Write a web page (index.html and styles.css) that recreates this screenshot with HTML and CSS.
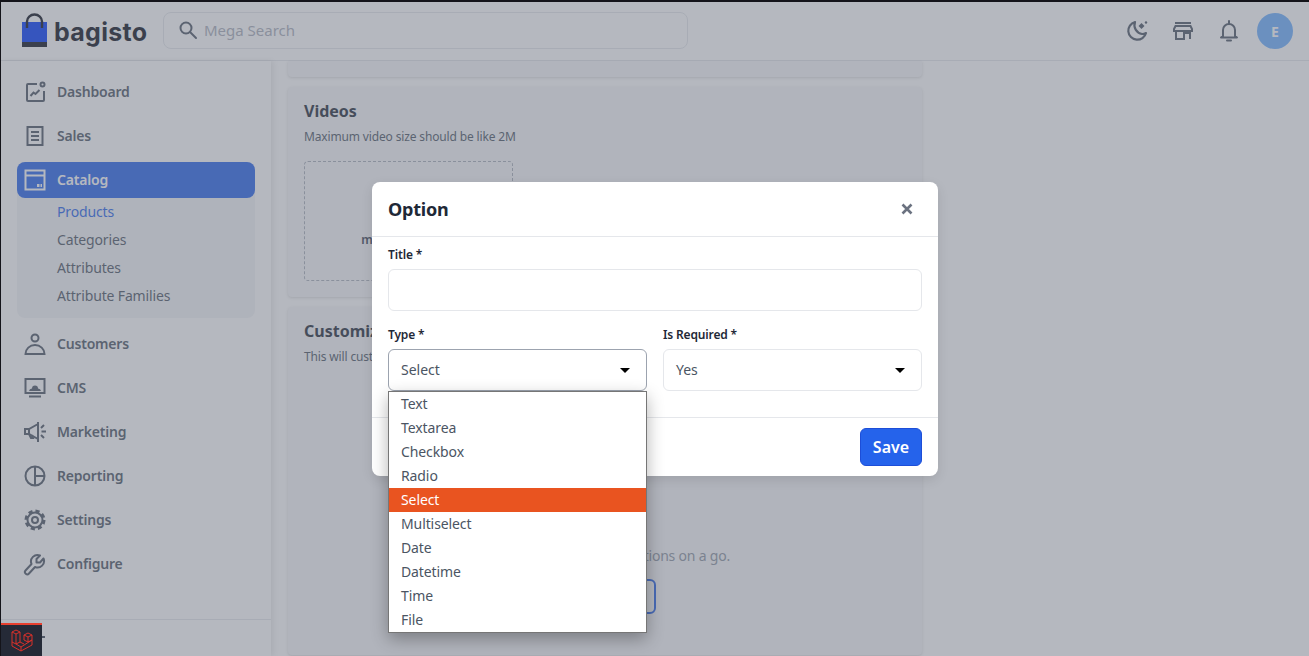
FILE: index.html
```html
<!DOCTYPE html>
<html lang="en">
<head>
    <meta charset="UTF-8">
    <meta name="viewport" content="width=device-width, initial-scale=1.0">
    <title>Option</title>
    <link rel="stylesheet" href="styles.css">
</head>
<body>

<div class="page">
    <header class="topbar">
        <div class="logo">
            <svg width="26" height="36" viewBox="0 0 26 36">
                <rect x="0" y="9" width="25" height="20" fill="#0038fc"/>
                <rect x="0" y="29" width="25" height="5" fill="#0a0e1a"/>
                <path d="M5 15V8.500a7.500 7 0 0 1 15 0V15" fill="none" stroke="#0a0e1a" stroke-width="2.400"/>
            </svg>
            <span class="logo-text">bagisto</span>
        </div>
        <div class="search">
            <svg width="20" height="20" viewBox="0 0 20 20" fill="none" stroke="#4b5563" stroke-width="2">
                <circle cx="8" cy="8" r="5.500"/>
                <path d="M12 12l6 6" stroke-linecap="round"/>
            </svg>
            <span>Mega Search</span>
        </div>
        <div class="top-actions">
            <svg class="top-icon" viewBox="0 0 24 24" fill="none" stroke="#4b5563" stroke-width="2.200">
                <path d="M10 3a9 9 0 1 0 11 11 8 8 0 0 1-4 1A9 9 0 0 1 10 3z" stroke-linejoin="round"/>
                <path d="M13.500 7l3-3 3 3-3 3z" fill="#4b5563" stroke="none"/>
                <circle cx="21" cy="3.500" r="1.200" fill="#4b5563" stroke="none"/>
            </svg>
            <svg class="top-icon" viewBox="0 0 24 24" fill="none" stroke="#4b5563" stroke-width="2">
                <path d="M4 4h16M3 10l1.500-3h15L21 10v2H3zM5 12v8h8v-6h6v6M19 12v2"/>
            </svg>
            <svg class="top-icon" viewBox="0 0 24 24" fill="none" stroke="#4b5563" stroke-width="2">
                <path d="M6 17V11a6 6 0 0 1 12 0v6l2 1.500H4z" stroke-linejoin="round"/>
                <path d="M12 2v3M10 21.500h4" stroke-linecap="round"/>
            </svg>
            <div class="avatar">E</div>
        </div>
    </header>

    <div class="layout">
        <aside class="sidebar">
            <nav class="nav">
                <a class="nav-item">
                    <svg class="nav-icon" viewBox="0 0 24 24"><path d="M14 4H5a1 1 0 0 0-1 1v15a1 1 0 0 0 1 1h15a1 1 0 0 0 1-1v-9"/><circle cx="19.500" cy="4.500" r="2"/><path d="M7.500 16l3-3.500 2 1.500 4-4"/></svg>
                    Dashboard
                </a>
                <a class="nav-item">
                    <svg class="nav-icon" viewBox="0 0 24 24"><rect x="4.500" y="3" width="15" height="18"/><path d="M8 8h8M8 12h8M8 16h8"/></svg>
                    Sales
                </a>
                <div class="nav-group">
                    <a class="nav-item active">
                        <svg class="nav-icon" viewBox="0 0 24 24"><rect x="2.500" y="2.500" width="19" height="19"/><path d="M3 7.500h18"/><path d="M14 16h2.500v3H14zM17.500 16H19v3h-1.500z" fill="#fff" stroke="none"/></svg>
                        Catalog
                    </a>
                    <div class="submenu">
                        <a class="sub-item current">Products</a>
                        <a class="sub-item">Categories</a>
                        <a class="sub-item">Attributes</a>
                        <a class="sub-item">Attribute Families</a>
                    </div>
                </div>
                <a class="nav-item">
                    <svg class="nav-icon" viewBox="0 0 24 24"><circle cx="12" cy="6" r="3.500"/><path d="M2.500 22a9.500 9 0 0 1 19 0z"/></svg>
                    Customers
                </a>
                <a class="nav-item">
                    <svg class="nav-icon" viewBox="0 0 24 24"><rect x="2.500" y="3" width="19" height="14"/><path d="M6 15a3 3 0 0 1 3-2.500 3 3 0 0 1 6 0 3 3 0 0 1 3 2.500z" fill="#4b5563" stroke="none"/><path d="M6 20.500h12"/></svg>
                    CMS
                </a>
                <a class="nav-item">
                    <svg class="nav-icon" viewBox="0 0 24 24"><path d="M15 2v20M15 4L6 9H2v5h4l9 5"/><path d="M6 9v5l2 4h2l-1-3"/><path d="M18 8l3-3M18.500 11.500H23M18 15l3 3"/></svg>
                    Marketing
                </a>
                <a class="nav-item">
                    <svg class="nav-icon" viewBox="0 0 24 24"><circle cx="12" cy="12" r="9.500"/><path d="M12 2.500v19M12 12h9.500"/></svg>
                    Reporting
                </a>
                <a class="nav-item">
                    <svg class="nav-icon" viewBox="0 0 24 24"><circle cx="12" cy="12" r="7.500"/><circle cx="12" cy="12" r="9" stroke-width="3" stroke-dasharray="4.100 3"/><circle cx="12" cy="12" r="3"/></svg>
                    Settings
                </a>
                <a class="nav-item">
                    <svg class="nav-icon" viewBox="0 0 24 24"><path d="M17 10.500h-3.500V7l3.500-3.500a6.500 6.500 0 0 0-8.500 8.500l-6 6.500a2.200 2.200 0 0 0 3.500 3l6-6.500a6.500 6.500 0 0 0 8.500-8.500z" stroke-linejoin="round"/></svg>
                    Configure
                </a>
            </nav>
            <div class="sidebar-foot"><span class="collapse-mark"></span></div>
        </aside>

        <main class="content">
            <section class="card card-cut"></section>
            <section class="card card-videos">
                <h3>Videos</h3>
                <p class="hint">Maximum video size should be like 2M</p>
                <div class="dropzone">
                    <span class="dropzone-types">mp4, webm, mkv</span>
                </div>
            </section>
            <section class="card card-grow">
                <h3>Customizable Options</h3>
                <p class="hint">This will customize the product</p>
                <div class="empty">
                    <strong class="empty-title">Add Option</strong>
                    <span class="empty-text">Add new customizable options on a go.</span>
                    <button class="outline-btn">Add Option</button>
                </div>
            </section>
        </main>
    </div>

    <div class="overlay">
        <div class="modal">
            <div class="modal-head">
                <h2>Option</h2>
                <svg width="12" height="12" viewBox="0 0 12 12" stroke="#6b7280" stroke-width="2.600"><path d="M1.500 1.500l9 9M10.500 1.500l-9 9"/></svg>
            </div>
            <form class="modal-body">
                <label class="field-label">Title *</label>
                <div class="input"></div>
                <div class="field-row">
                    <div class="field">
                        <label class="field-label">Type *</label>
                        <div class="input select focused"><span class="select-value">Select</span><span class="caret"></span></div>
                        <ul class="options">
                            <li>Text</li>
                            <li>Textarea</li>
                            <li>Checkbox</li>
                            <li>Radio</li>
                            <li class="selected">Select</li>
                            <li>Multiselect</li>
                            <li>Date</li>
                            <li>Datetime</li>
                            <li>Time</li>
                            <li>File</li>
                        </ul>
                    </div>
                    <div class="field">
                        <label class="field-label">Is Required *</label>
                        <div class="input select"><span class="select-value">Yes</span><span class="caret"></span></div>
                    </div>
                </div>
            </form>
            <div class="modal-foot">
                <button class="save-btn">Save</button>
            </div>
        </div>
    </div>

    <div class="debugbar">
        <svg width="22" height="24" viewBox="0 0 22 24" fill="none" stroke="#d9302a" stroke-width="1" stroke-linejoin="round">
            <path d="M1 3l4-2 4 2v10l-4 2-4-2zM1 3l4 2 4-2M5 5v10M1 13v4l9 5 11-6v-5M10 22v-4l-5-3M10 18l11-7M9 13l4 2M13 6l4-2 4 2v5l-4 2-4-2zM13 6l4 2 4-2M17 8v5"/>
        </svg>
    </div>
</div>

</body>
</html>
```

FILE: styles.css
```css
* { box-sizing: border-box; }

body {
    margin: 0;
    font-family: "Noto Sans", Arial, sans-serif;
    color: #111827;
    background: #fff;
}

.page {
    position: relative;
    width: 1309px;
    height: 656px;
    overflow: hidden;
    border-top: 2px solid #14141a;
    border-left: 1px solid #14141a;
    background: #fefefe;
    display: flex;
    flex-direction: column;
}

/* top bar */
.topbar {
    height: 59px;
    flex-shrink: 0;
    display: flex;
    align-items: center;
    padding: 0 16px 0 21px;
    background: #fff;
    border-bottom: 1px solid #e5e7eb;
}
.logo { display: flex; align-items: center; gap: 6px; width: 141px; }
.logo-text {
    margin-top: 2px;
    font-family: Inter, Arial, sans-serif;
    font-size: 25px;
    font-weight: 700;
    color: #0a0e1a;
    letter-spacing: 0.3px;
}
.search {
    width: 525px;
    height: 37px;
    display: flex;
    align-items: center;
    gap: 6px;
    padding-left: 14px;
    margin-bottom: 2px;
    border: 1px solid #e5e7eb;
    border-radius: 8px;
    font-size: 15px;
    color: #a8adb8;
}
.top-actions { margin-left: auto; display: flex; align-items: center; gap: 22px; }
.top-icon { width: 24px; height: 24px; }
.avatar {
    width: 36px;
    height: 36px;
    margin-left: -6px;
    border-radius: 50%;
    background: #6aaeff;
    color: #fff;
    font-size: 14px;
    font-weight: 700;
    display: flex;
    align-items: center;
    justify-content: center;
}

.layout { flex: 1; display: flex; min-height: 0; }

/* sidebar */
.sidebar {
    width: 270px;
    flex-shrink: 0;
    display: flex;
    flex-direction: column;
    background: #fff;
    box-shadow: 2px 0 6px rgba(0,0,0,0.1);
}
.nav {
    flex: 1;
    display: flex;
    flex-direction: column;
    gap: 8px;
    padding: 13px 16px 0;
}
.nav-item {
    height: 36px;
    display: flex;
    align-items: center;
    gap: 10px;
    padding: 0 6px 2px;
    border-radius: 8px;
    font-size: 14px;
    font-weight: 600;
    letter-spacing: -0.2px;
    color: #4b5563;
}
.nav-item.active { background: #2563eb; color: #fff; }
.nav-icon {
    width: 24px;
    height: 24px;
    margin-top: 2px;
    fill: none;
    stroke: #4b5563;
    stroke-width: 2;
}
.active .nav-icon { stroke: #fff; }
.nav-group { background: #f3f4f6; border-radius: 8px; }
.submenu { padding-bottom: 8px; }
.sub-item {
    display: block;
    height: 28px;
    line-height: 28px;
    padding-left: 40px;
    font-size: 14px;
    letter-spacing: -0.15px;
    color: #4b5563;
}
.sub-item.current { color: #2563eb; }
.sidebar-foot {
    height: 37px;
    border-top: 1px solid #e5e7eb;
    position: relative;
}
.collapse-mark {
    position: absolute;
    left: 41px;
    top: 16px;
    width: 3px;
    height: 2px;
    background: #374151;
}

/* page behind the modal */
.content {
    width: 652px;
    padding-left: 17px;
    display: flex;
    flex-direction: column;
    gap: 10px;
}
.card {
    width: 634px;
    padding: 12px 16px 16px;
    background: #f6f7f8;
    border-radius: 4px;
    box-shadow: 0 1px 3px rgba(0,0,0,0.14);
}
.card-cut { height: 16px; padding: 0; border-radius: 0 0 4px 4px; }
.card-grow { flex: 1; margin-bottom: 1px; }
.card h3 {
    margin: 0;
    font-size: 16px;
    line-height: 24px;
    font-weight: 700;
    color: #1f2937;
}
.hint {
    margin: 2px 0 0;
    font-size: 12px;
    line-height: 24px;
    letter-spacing: -0.15px;
    color: #4b5563;
}
.dropzone {
    width: 209px;
    height: 120px;
    margin-top: 12px;
    border: 1px dashed #a8aeb9;
    border-radius: 4px;
    display: flex;
    flex-direction: column;
    align-items: center;
    justify-content: flex-end;
    padding-bottom: 32px;
    font-size: 12px;
    font-weight: 600;
    letter-spacing: -0.4px;
    color: #374151;
}
.empty {
    display: flex;
    flex-direction: column;
    align-items: center;
    margin-top: 155px;
}
.empty-title { font-size: 15px; line-height: 22px; color: #8b93a0; }
.empty-text { font-size: 14px; line-height: 20px; letter-spacing: -0.2px; color: #8b93a0; }
.outline-btn {
    width: 102px;
    height: 35px;
    margin-top: 13px;
    border: 2px solid #2563eb;
    border-radius: 6px;
    background: #fff;
    color: #2563eb;
    font-family: inherit;
    font-size: 14px;
    font-weight: 600;
}

/* modal */
.overlay {
    position: absolute;
    inset: -2px 0 0 -1px;
    background: rgba(107,114,128,0.5);
}
.modal {
    width: 566px;
    margin: 182px 0 0 372px;
    background: #fff;
    border-radius: 8px;
    box-shadow: 0 4px 12px rgba(0,0,0,0.1);
}
.modal-head {
    height: 55px;
    display: flex;
    align-items: center;
    justify-content: space-between;
    padding: 0 25px 0 16px;
    border-bottom: 1px solid #e5e7eb;
}
.modal-head h2 {
    margin: 0;
    font-size: 18px;
    font-weight: 700;
    letter-spacing: -0.2px;
    color: #1f2937;
}
.modal-body { padding: 9px 16px 26px; }
.field-label {
    display: block;
    margin-bottom: 5px;
    font-size: 12px;
    line-height: 18px;
    font-weight: 600;
    letter-spacing: -0.15px;
    color: #1f2937;
}
.input {
    height: 42px;
    border: 1px solid #e5e7eb;
    border-radius: 6px;
    background: #fff;
}
.field-row {
    display: grid;
    grid-template-columns: 1fr 1fr;
    gap: 16px;
    margin-top: 15px;
}
.field { position: relative; }
.select {
    display: flex;
    align-items: center;
    justify-content: space-between;
    padding: 0 16px 0 12px;
    font-size: 14px;
    color: #4b5563;
}
.select-value { margin-bottom: 2px; }
.select.focused { border-color: #9ca3af; }
.caret {
    width: 0;
    height: 0;
    border-left: 5.500px solid transparent;
    border-right: 5.500px solid transparent;
    border-top: 5px solid #000;
}

/* the open native list */
.options {
    position: absolute;
    top: 100%;
    left: 0;
    right: 0;
    z-index: 2;
    margin: 0;
    padding: 0;
    list-style: none;
    background: #fff;
    border: 1px solid #767676;
    box-shadow: 0 6px 16px rgba(0,0,0,0.3);
}
.options li {
    height: 24px;
    line-height: 24px;
    padding-left: 12px;
    font-size: 14px;
    letter-spacing: -0.1px;
    color: #4b5563;
}
.options li.selected { background: #e95420; color: #fff; }

.modal-foot {
    display: flex;
    justify-content: flex-end;
    padding: 10px 16px;
    border-top: 1px solid #e5e7eb;
}
.save-btn {
    width: 62px;
    height: 38px;
    border: 1px solid #1d4ed8;
    border-radius: 6px;
    background: #2563eb;
    color: #fff;
    font-family: inherit;
    font-size: 16px;
    font-weight: 600;
}

/* debug toolbar sits above everything */
.debugbar {
    position: absolute;
    left: 0;
    bottom: 0;
    width: 41px;
    height: 33px;
    border-top: 2px solid #e8402f;
    background: #252a37;
    display: flex;
    align-items: center;
    justify-content: center;
    z-index: 5;
}
```
